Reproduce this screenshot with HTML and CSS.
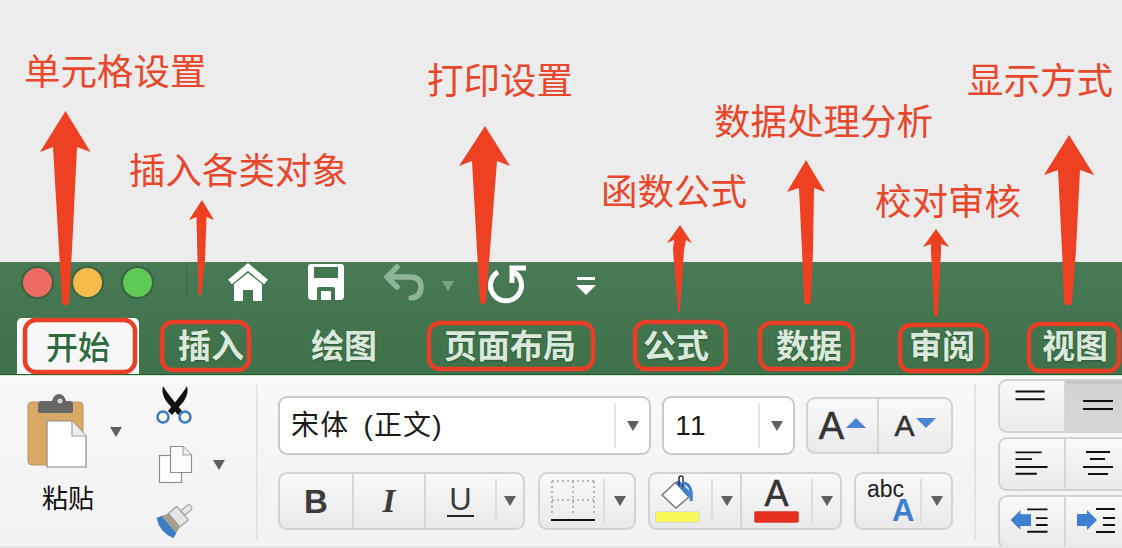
FILE: index.html
```html
<!DOCTYPE html>
<html lang="zh-CN">
<head>
<meta charset="utf-8">
<title>Excel 功能区</title>
<link rel="stylesheet" href="styles.css">
</head>
<body>
<div class="page">
  <div class="blank"></div>
  <header class="titlebar">
    <div class="qat">
      <span class="light red"></span><span class="light yellow"></span><span class="light green"></span>
      <span class="qat-sep"></span>
      <svg class="q-home" width="42" height="40" viewBox="0 0 42 40"><path d="M3 19 21 4 39 19" fill="none" stroke="#fff" stroke-width="6" stroke-linejoin="miter"/><path d="M7 21 21 10 35 21V38H26V27H16V38H7Z" fill="#fff"/></svg>
      <svg class="q-save" width="38" height="38" viewBox="0 0 38 38"><path d="M4 1H34Q37 1 37 4V33Q37 37 33 37H5Q1 37 1 33V4Q1 1 4 1Z" fill="#fff"/><rect x="7" y="4" width="24" height="11" fill="#44784f"/><path d="M10 37V26Q10 24 12 24H26Q28 24 28 26V37H24V28H14V37Z" fill="#44784f"/></svg>
      <svg class="q-undo" width="42" height="40" viewBox="0 0 42 40"><path d="M13 5 3 15 13 25M4 15H26Q37 15 37 25T27 36" fill="none" stroke="#8db596" stroke-width="5.5" stroke-linecap="round" stroke-linejoin="round"/></svg>
      <span class="tri q-undo-tri"></span>
      <svg class="q-redo" width="42" height="42" viewBox="0 0 42 42"><path d="M11 9A15.500 15.500 0 1 0 27 9" fill="none" stroke="#fff" stroke-width="5"/><path d="M39 5H25V20" fill="none" stroke="#fff" stroke-width="5"/></svg>
      <svg class="q-more" width="20" height="20" viewBox="0 0 20 20"><rect x="1" y="1" width="18" height="3" fill="#fff"/><path d="M0 9H20L10 19Z" fill="#fff"/></svg>
    </div>
    <nav class="tabs">
      <span class="tab active">开始</span>
      <span class="tab">插入</span>
      <span class="tab">绘图</span>
      <span class="tab">页面布局</span>
      <span class="tab">公式</span>
      <span class="tab">数据</span>
      <span class="tab">审阅</span>
      <span class="tab">视图</span>
    </nav>
  </header>

  <section class="ribbon">
    <div class="group clip-group">
      <div class="paste-col">
        <div class="paste-top">
          <svg width="62" height="76" viewBox="0 0 62 76"><rect x="1" y="9" width="55" height="63" rx="4" fill="#d9a965" stroke="#b9945f"/><path d="M11 12Q11 8 15 8H25Q27 1 32 1T39 8H42Q46 8 46 12V18Q46 20 43 20H14Q11 20 11 18Z" fill="#666"/><circle cx="33" cy="8" r="2.500" fill="#d9d9d9"/><path d="M20 28H45L59 43V74H20Z" fill="#fff" stroke="#8a8a8a" stroke-width="1.200"/><path d="M45 28V43H59" fill="#eee" stroke="#a5a5a5" stroke-width="1.200"/></svg>
          <span class="tri paste-tri"></span>
        </div>
        <div class="paste-label">粘贴</div>
      </div>
      <div class="small-col">
        <svg width="42" height="42" viewBox="0 0 42 42"><path d="M8 1Q12 8 27 26L23 30 11 16Q6 8 8 1Z" fill="#111"/><path d="M32 1Q28 8 13 26L17 30 29 16Q34 8 32 1Z" fill="#111"/><circle cx="8" cy="32" r="5.500" fill="#fff" stroke="#3b79c4" stroke-width="2.500"/><circle cx="30" cy="32" r="5.500" fill="#fff" stroke="#3b79c4" stroke-width="2.500"/></svg>
        <div class="copy-row">
          <svg width="42" height="40" viewBox="0 0 42 40"><rect x="4.500" y="10.500" width="22" height="27" fill="#fff" stroke="#8d8d8d" stroke-width="1.200"/><path d="M15.500 1.500H28L36.500 10V27.500H15.500Z" fill="#fbfbfb" stroke="#8d8d8d" stroke-width="1.200"/><path d="M28 1.500V10H36.500" fill="#ececec" stroke="#a8a8a8" stroke-width="1.200"/></svg>
          <span class="tri copy-tri"></span>
        </div>
        <svg width="42" height="38" viewBox="0 0 42 38"><g transform="translate(23 14) rotate(50)"><path d="M-3 -6V-14Q-3 -17 0 -17T3 -14V-6Z" fill="#e6e6e6" stroke="#9b9b9b"/><rect x="-9" y="-6" width="18" height="11" rx="1" fill="#e4e4e4" stroke="#8f8f8f"/><path d="M-9 5H9L13 17Q0 24 -13 17Z" fill="#a59f91"/><path d="M-11.500 12H11.500L13 17Q0 24 -13 17Z" fill="#3c7cc9"/></g></svg>
      </div>
    </div>
    <span class="sep"></span>

    <div class="font-group">
      <div class="font-row first">
        <div class="select font-select"><span class="sel-text">宋体 (正文)</span><span class="sel-drop"><span class="tri"></span></span></div>
        <div class="select size-select"><span class="sel-text">11</span><span class="sel-drop"><span class="tri"></span></span></div>
        <div class="btns grow-btns">
          <span class="seg seg-grow"><span class="big-a">A</span><span class="tri-up"></span></span>
          <span class="seg seg-shrink"><span class="small-a">A</span><span class="tri-down"></span></span>
        </div>
      </div>
      <div class="font-row">
        <div class="btns biu">
          <span class="seg seg-b"><b class="bold-b">B</b></span>
          <span class="seg seg-i"><span class="ital-i">I</span></span>
          <span class="seg seg-u"><span class="under-u">U</span></span>
          <span class="drop"><span class="tri"></span></span>
        </div>
        <div class="btns borders">
          <span class="seg seg-plain seg-border">
            <svg width="44" height="42" viewBox="0 0 44 42"><path d="M1 1H43M1 20H43M22 1V34M1 1V34M43 1V34" fill="none" stroke="#a2a2a2" stroke-width="1.500" stroke-dasharray="2 3"/><rect x="0" y="39" width="44" height="2" fill="#111"/></svg>
          </span>
          <span class="drop"><span class="tri"></span></span>
        </div>
        <div class="btns colors">
          <span class="seg seg-fill">
            <span class="swatch-box">
              <svg width="34" height="36" viewBox="0 0 34 36"><path d="M1 20 15 7 28 22 15 33Z" fill="#fff" stroke="#777" stroke-width="1.500"/><path d="M14 8 18 5 31 19 27 22Z" fill="#3f7fd0"/><path d="M18 11V3Q18 1 20 1T22 3V12" fill="none" stroke="#333" stroke-width="1.500"/><path d="M22 8Q32 9 30 26" fill="none" stroke="#3f7fd0" stroke-width="3"/></svg>
              <span class="swatch yellow-swatch"></span>
            </span>
          </span>
          <span class="drop"><span class="tri"></span></span>
          <span class="seg seg-color">
            <span class="swatch-box">
              <span class="color-a">A</span>
              <span class="swatch red-swatch"></span>
            </span>
          </span>
          <span class="drop"><span class="tri"></span></span>
        </div>
        <div class="btns abc">
          <span class="seg seg-plain seg-abc"><span class="abc-text">abc</span><span class="abc-a">A</span></span>
          <span class="drop"><span class="tri"></span></span>
        </div>
      </div>
    </div>
    <span class="sep second"></span>

    <div class="align-group">
      <div class="btns align-row">
        <span class="seg seg-al"><svg width="66" height="50" viewBox="0 0 66 50"><path d="M16 10H46M16 18H46" stroke="#111" stroke-width="2"/></svg></span>
        <span class="seg seg-al selected"><svg width="66" height="50" viewBox="0 0 66 50"><path d="M17 20H47M17 28H47" stroke="#111" stroke-width="2"/></svg></span>
      </div>
      <div class="btns align-row">
        <span class="seg seg-al"><svg width="66" height="50" viewBox="0 0 66 50"><path d="M16 13H43M16 20H33M16 28H49M16 35H38" stroke="#111" stroke-width="2"/></svg></span>
        <span class="seg seg-al"><svg width="66" height="50" viewBox="0 0 66 50"><path d="M20 13H44M24 20H39M17 28H47M22 35H42" stroke="#111" stroke-width="2"/></svg></span>
      </div>
      <div class="btns align-row">
        <span class="seg seg-al"><svg width="66" height="50" viewBox="0 0 66 50"><path d="M11 23 21 13V17H32V29H21V33Z" fill="#3f7fd0"/><path d="M28 12H49M37 21H49M37 28H49M28 35H49" stroke="#111" stroke-width="2"/></svg></span>
        <span class="seg seg-al"><svg width="66" height="50" viewBox="0 0 66 50"><path d="M31 23 21 13V17H11V29H21V33Z" fill="#3f7fd0"/><path d="M30 12H49M37 21H49M37 28H49M30 35H49" stroke="#111" stroke-width="2"/></svg></span>
      </div>
    </div>
  </section>

  <svg class="marks" width="1122" height="548" viewBox="0 0 1122 548">
    <g class="arrows">
      <path d="M65.500 111 40 152 53 147 59 250 62 303Q65.500 308 69 303L72 250 77 147 90.500 152Z"/>
      <path d="M202 200 189 220 196.500 217 197.500 260 198.500 294Q200 297 201.500 294L205 260 206.500 217 214 220Z"/>
      <path d="M485 126 459 166 472 161 477 250 480 302Q483 307 486 302L490 250 497 161 510 166Z"/>
      <path d="M680 225 667 243 674 240 673 250 678 311Q679 314 680 311L684 250 686 240 692 243Z"/>
      <path d="M806 160 787 192 799 188 802 250 804 302Q808 307 811 302L813 250 814 188 825 192Z"/>
      <path d="M936 229 923 247 931 244 931 250 934 315Q936 318 938 315L941 250 941 244 949 247Z"/>
      <path d="M1069 135 1044 175 1058 170 1062 250 1064 303Q1068 308 1072 303L1076 250 1080 170 1094 175Z"/>
    </g>
    <g class="boxes">
      <rect x="25" y="320" width="110" height="52" rx="11"/>
      <rect x="162" y="322" width="87" height="48" rx="11"/>
      <rect x="429" y="323" width="164" height="46" rx="11"/>
      <rect x="635" y="322" width="91" height="47" rx="11"/>
      <rect x="760" y="323" width="93" height="46" rx="11"/>
      <rect x="900" y="325" width="87" height="46" rx="11"/>
      <rect x="1029" y="324" width="90" height="47" rx="11"/>
    </g>
  </svg>
  <div class="note n1">单元格设置</div>
  <div class="note n2">插入各类对象</div>
  <div class="note n3">打印设置</div>
  <div class="note n4">函数公式</div>
  <div class="note n5">数据处理分析</div>
  <div class="note n6">校对审核</div>
  <div class="note n7">显示方式</div>
</div>
</body>
</html>
```
FILE: styles.css
```css
* { box-sizing: border-box; }
html, body { margin: 0; padding: 0; }
body { font-family: "Noto Sans CJK SC", "Liberation Sans", sans-serif; }
.page { position: relative; width: 1122px; height: 548px; overflow: hidden; background: #ececec; }
.blank { height: 262px; }

.tri { display: block; width: 0; height: 0; border-left: 6px solid transparent; border-right: 6px solid transparent; border-top: 10px solid #606060; flex: none; }

.titlebar { height: 113px; background: linear-gradient(#477a55, #3f714a); border-bottom: 1px solid #265a34; }
.qat { height: 55px; display: flex; align-items: center; padding-left: 21px; }
.light { width: 33px; height: 33px; border-radius: 50%; margin-right: 17px; margin-top: -15px; border: 2px solid #38653f; }
.light.red { background: #ee6b64; }
.light.yellow { background: #f6bb4c; }
.light.green { background: #5fc955; }
.qat-sep { width: 1px; height: 37px; background: #386842; margin: -16px 0 0 15px; }
.q-home { margin: -14px 0 0 40px; }
.q-save { margin: -15px 0 0 38px; }
.q-undo { margin: -16px 0 0 39px; }
.q-undo-tri { border-top-color: #7ba588; margin: -7px 0 0 16px; }
.q-redo { margin: -11px 0 0 33px; }
.q-more { margin: -7px 0 0 47px; }

.tabs { height: 57px; display: flex; align-items: stretch; padding: 1px 0 0 17px; overflow: hidden; }
.tab { display: flex; flex: none; white-space: nowrap; align-items: center; padding: 0 33.500px 4px; font-size: 33px; font-weight: 700; color: #dbe9dd; text-shadow: 0 1px 2px #2a5533; line-height: 1; }
.tab.active { padding: 0 29px 3px; margin-right: 5.500px; font-size: 32px; background: #f7f7f7; border-radius: 5px 5px 0 0; color: #2e6a3c; text-shadow: none; font-weight: 500; }

.ribbon { height: 173px; display: flex; overflow: hidden; background: linear-gradient(#f8f8f8, #f2f2f2); border-top: 1px solid #cfe6cf; border-bottom: 2px solid #e6e6e6; }
.clip-group { display: flex; width: 256px; padding-left: 27px; flex: none; }
.paste-col { width: 128px; padding-top: 17px; }
.paste-top { display: flex; align-items: flex-start; }
.paste-tri { margin: 34px 0 0 21px; }
.paste-label { font-size: 26px; line-height: 30px; margin: 13px 0 0 15px; color: #111; }
.small-col { display: flex; flex-direction: column; padding-top: 9px; gap: 18px; }
.small-col svg { display: block; }
.copy-row { display: flex; align-items: center; height: 40px; }
.copy-tri { margin-left: 16px; }

.sep { width: 2px; height: 155px; margin-top: 9px; background: #e3e3e3; flex: none; }

.font-group { width: 675px; margin-left: 20px; padding-top: 20px; flex: none; }
.font-row { display: flex; gap: 12px; height: 58px; }
.font-row.first { height: 59px; margin-bottom: 17px; gap: 11px; }

.select { display: flex; align-items: center; background: #fff; border: 2px solid #c9c9c9; border-radius: 9px; color: #1a1a1a; }
.font-select { width: 374px; }
.size-select { width: 133px; }
.sel-text { flex: 1; padding-left: 11px; font-size: 28px; line-height: 1; letter-spacing: 1.200px; word-spacing: 5px; font-family: "Liberation Sans", "Noto Sans CJK SC", sans-serif; }
.sel-drop { width: 35px; height: 45px; display: flex; align-items: center; justify-content: center; border-left: 2px solid #e6e6e6; }

.btns { display: flex; background: linear-gradient(#f9f9f9, #e9e9e9); border: 2px solid #d2d2d2; border-radius: 9px; overflow: hidden; flex: none; }
.seg { display: flex; align-items: center; justify-content: center; border-right: 2px solid #d6d6d6; }
.seg:last-child { border-right: 0; }
.drop { display: flex; align-items: center; justify-content: center; width: 31px; height: 44px; align-self: center; border-left: 2px solid #dddddd; flex: none; }

.grow-btns { width: 147px; height: 57px; margin-top: 1px; font-family: "Liberation Sans", sans-serif; color: #333; }
.seg-grow { width: 71px; gap: 2px; }
.seg-shrink { flex: 1; gap: 1px; }
.big-a { font-size: 38px; line-height: 1; -webkit-text-stroke: 0.6px #333; }
.small-a { font-size: 30px; line-height: 1; -webkit-text-stroke: 0.6px #333; }
.tri-up, .tri-down { width: 0; height: 0; border-left: 10px solid transparent; border-right: 10px solid transparent; }
.tri-up { border-bottom: 10px solid #4a86d4; margin-top: -6px; }
.tri-down { border-top: 10px solid #4a86d4; margin-top: -6px; }

.biu { width: 247px; font-family: "Liberation Sans", sans-serif; color: #3c3c3c; }
.biu .drop { width: 28px; }
.seg-b { width: 74px; }
.seg-i { width: 72px; }
.seg-u { width: 69px; border-right: 0; }
.bold-b { font-size: 33px; line-height: 1; }
.ital-i { font: italic 700 33px/1 "Liberation Serif", serif; }
.under-u { font-size: 31px; line-height: 30px; border-bottom: 2px solid #222; padding: 0 2px; }

.borders { width: 98px; margin-left: 1px; }
.seg-plain { flex: 1; border-right: 0; }
.seg-border { padding-left: 3px; }
.colors { width: 194px; }
.seg-fill { width: 61px; border: 0; padding-right: 6px; }
.seg-color { width: 71px; border: 0; border-left: 2px solid #d6d6d6; }
.colors .drop { width: 29px; }
.swatch-box { display: flex; flex-direction: column; align-items: center; justify-content: flex-end; height: 100%; padding-bottom: 5px; }
.swatch { display: block; width: 45px; height: 12px; border-radius: 2px; flex: none; }
.yellow-swatch { background: #f9f85a; border: 1px solid #dadada; }
.red-swatch { background: #e72f20; border: 1px solid #e0615a; }
.color-a { font: 36px/34px "Liberation Sans", sans-serif; color: #333; -webkit-text-stroke: 0.5px #333; }
.abc { width: 99px; }
.seg-abc { flex-direction: column; align-items: flex-start; padding-left: 11px; font-family: "Liberation Sans", sans-serif; }
.abc-text { font-size: 23px; line-height: 20px; color: #222; }
.abc-a { font-size: 31px; line-height: 24px; font-weight: 700; color: #3f7fd0; margin-left: 25px; }

.sep.second { margin-left: 21px; }
.align-group { width: 140px; margin-left: 22px; padding-top: 3px; display: flex; flex-direction: column; gap: 4px; flex: none; }
.align-row { height: 54px; border-right: 0; border-radius: 9px 0 0 9px; }
.seg-al { width: 66px; flex: none; }
.seg-al svg { display: block; }
.seg-al.selected { background: linear-gradient(#bcbcbc 0, #d4d4d4 4px, #d6d6d6); }

.marks { position: absolute; left: 0; top: 0; pointer-events: none; }
.arrows path { fill: #ee4123; }
.boxes rect { fill: none; stroke: #ea3f27; stroke-width: 4.500; }
.note { position: absolute; font-size: 36.500px; line-height: 40px; color: #e8472c; white-space: nowrap; }
.n1 { left: 24px; top: 50px; }
.n2 { left: 129px; top: 149px; }
.n3 { left: 427px; top: 59px; }
.n4 { left: 601px; top: 170px; }
.n5 { left: 714px; top: 100px; }
.n6 { left: 875px; top: 180px; }
.n7 { left: 967px; top: 59px; }
```
